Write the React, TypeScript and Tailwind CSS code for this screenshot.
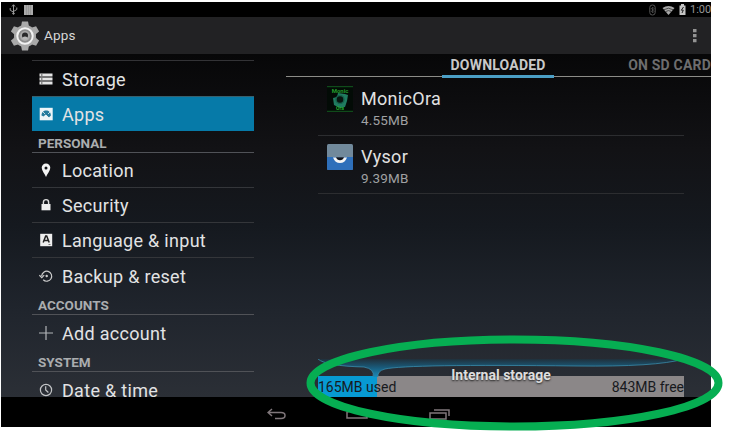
import React from "react";

function GearIcon() {
  return (
    <svg className="h-[30px] w-7 shrink-0" viewBox="0 0 28 30">
      <g fill="#a9a9a9">
        {[0, 60, 120].map((a) => (
          <path key={a} d="M11 0.5h6l1 5v19l-1 5h-6l-1-5v-19z" transform={`rotate(${a} 14 15)`} />
        ))}
        <circle cx="14" cy="15" r="11" />
      </g>
      <circle cx="14" cy="15" r="7.7" fill="#8c8c8c" stroke="#f2f2f2" strokeWidth="2" />
      <circle cx="14" cy="15" r="5" fill="#aaa" />
      <circle cx="14" cy="14.6" r="3" fill="#29292a" />
      <path d="M11.5 16.5q2.5-2 5 0v2h-5z" fill="#b8b8b8" />
    </svg>
  );
}

const icons: Record<string, React.ReactNode> = {
  storage: (
    <g>
      <path d="M0.5 1.5h13v3h-13zM0.5 5.5h13v3h-13zM0.5 9.5h13v3h-13z" fill="#e4e4e4" />
      <path d="M2 2.5h1.5v1H2zM2 6.5h1.5v1H2zM2 10.5h1.5v1H2z" fill="#333" />
    </g>
  ),
  apps: (
    <g>
      <rect x="0.7" y="0.8" width="13" height="12.5" fill="#edf5f8" />
      <path d="M2.5 8.5c0-3 2-5 4.7-5s4.7 2 4.7 5l-2 2-3.2-3-2.2 2z" fill="#237b9d" />
      <path d="M4 11l3-3 3 3M4 5l2 2M11 5l-2 2" fill="none" stroke="#e8f2f5" strokeWidth="0.8" />
    </g>
  ),
  location: (
    <path d="M7 0.5a4.3 4.3 0 0 0-4.3 4.3C2.7 8 6 11 7 14c1-3 4.3-6 4.3-9.2A4.3 4.3 0 0 0 7 .5zM7 3.4a1.5 1.5 0 1 1 0 3 1.5 1.5 0 0 1 0-3z" fill="#f4f4f4" fillRule="evenodd" />
  ),
  security: (
    <g>
      <rect x="2.5" y="6" width="9" height="6.3" fill="#eee" />
      <path d="M4.4 6.5V4.2a2.6 2.6 0 0 1 5.2 0v2.3" fill="none" stroke="#ddd" strokeWidth="1.4" />
    </g>
  ),
  language: (
    <g>
      <rect x="1.2" y="0.8" width="12" height="12.4" fill="#eee" />
      <path d="M4.2 9.5L6.7 3h1l2.5 6.5M5.1 7.5h4.2" fill="none" stroke="#222" strokeWidth="1.5" />
      <path d="M9.5 11.5h2" stroke="#777" />
    </g>
  ),
  backup: (
    <g fill="none" stroke="#ccc" strokeWidth="1.2">
      <path d="M2.7 7a5 5 0 1 1 1.5 3.8" />
      <path d="M0.4 6.2l2.4 2.4 2.4-2.4" />
      <circle cx="7.7" cy="7" r="0.6" fill="#ccc" />
    </g>
  ),
  add: <path d="M7 0v14M0 7h14" stroke="#b2b5b8" strokeWidth="1.2" />,
  clock: (
    <g fill="none" stroke="#c3c5c7" strokeWidth="1.2">
      <circle cx="7" cy="7" r="5.6" />
      <path d="M6.7 3.3V7l2.7 2.5" />
    </g>
  ),
};

function Item({ icon, label, last, active }: { icon: string; label: string; last?: boolean; active?: boolean }) {
  return (
    <div
      className={`flex h-[35px] shrink-0 items-center pl-[7px] ${
        active ? "border-t border-[#37616f] bg-[#067aa8]" : last ? "" : "border-b border-[#34363a]"
      }`}
    >
      <svg className="mr-[9px] h-3.5 w-3.5 shrink-0" viewBox="0 0 14 14">
        {icons[icon]}
      </svg>
      <span className="relative top-px whitespace-nowrap text-[18px] leading-[22px] tracking-[0.3px] text-[#e2e3e4]">{label}</span>
    </div>
  );
}

function Header({ children }: { children: string }) {
  return (
    <div className="flex h-[22px] shrink-0 items-center border-b border-[#505257] pl-[6px] pt-[3px] text-[13.5px] font-bold leading-[18px] text-[#aaadaf]">
      {children}
    </div>
  );
}

function StatusBar() {
  return (
    <div className="flex h-[15px] shrink-0 items-center bg-black pl-2 text-[#969696]">
      <svg className="h-[11px] w-[9px]" viewBox="0 0 9 11" fill="none" stroke="#999">
        <path d="M4.5 1v9M1.2 4v2.2l3.3 2M7.8 3.5v2l-3.3 2M3 2.5L4.5.7 6 2.5" />
        <circle cx="4.5" cy="9.5" r="0.8" fill="#999" />
      </svg>
      <svg className="ml-[6px] h-[11px] w-[9px]" viewBox="0 0 9 11">
        <path d="M0 1h9v10H0z" fill="#aaa" />
        <path d="M2.5 1v10M4.5 1v10M6.5 1v10" stroke="#8b8b8b" strokeWidth="0.6" />
      </svg>
      <div className="flex-1" />
      <svg className="h-[12px] w-[7px]" viewBox="0 0 7 12" fill="none" stroke="#555">
        <rect x="0.8" y="1" width="5.4" height="10" rx="2.5" />
        <path d="M2 4l3 3.5L3.5 9V3L5 4.5 2 8" strokeWidth="0.7" />
      </svg>
      <svg className="ml-[6px] h-[10px] w-[13px]" viewBox="0 0 13 10">
        <path d="M0.5 3Q6.5-1 12.5 3L6.5 10z" fill="#aaa" />
        <path d="M2 4.7q4.5-3 9 0M3.8 6.5q2.7-1.8 5.4 0" fill="none" stroke="#333" strokeWidth="0.8" />
      </svg>
      <svg className="ml-[4px] h-[11px] w-[7px]" viewBox="0 0 7 11">
        <path d="M0.5 1.5H2V0h3v1.5h1.5V11h-6z" fill="#c4c4c4" />
        <path d="M4.5 3L2.3 6.2h2L3 9" fill="none" stroke="#222" />
      </svg>
      <span className="ml-[4px] w-[21px] overflow-hidden whitespace-nowrap text-[11px] leading-[14px]">1:00</span>
    </div>
  );
}

function MonicIcon() {
  return (
    <svg className="h-[26px] w-[26px]" viewBox="0 0 26 26">
      <rect width="26" height="26" fill="#030b06" />
      <path d="M0 .7h26M0 25.3h26" stroke="#145b20" />
      <path d="M11 7l7 1 3 1-1 6-2 6-5 1-6-3-1-7 4-1z" fill="#207c60" />
      <circle cx="13" cy="13.5" r="4" fill="#07150f" stroke="#17644e" strokeWidth="1.5" />
      <text x="13" y="6.5" textAnchor="middle" fontSize="6" fontWeight="bold" fill="#229c2c">Monic</text>
      <text x="13" y="24" textAnchor="middle" fontSize="5" fontWeight="bold" fill="#22ae2c">Ora</text>
    </svg>
  );
}

function VysorIcon() {
  return (
    <svg className="h-[26px] w-[26px]" viewBox="0 0 26 26">
      <rect width="26" height="26" rx="1.5" fill="#71899b" />
      <path d="M0 13h26v11.5a1.5 1.5 0 0 1-1.5 1.5h-23A1.5 1.5 0 0 1 0 24.500z" fill="#2e6fba" />
      <path d="M6 13.500h14q-2 5.500-7 5.500t-7-5.500z" fill="#f4f4f4" />
      <path d="M9 13.300h8q-1 3-4 3t-4-3z" fill="#10131a" />
    </svg>
  );
}

function AppRow({ icon, name, size }: { icon: React.ReactNode; name: string; size: string }) {
  return (
    <div className="ml-8 mr-[27px] flex h-[58px] border-b border-[#2c2d30] pl-[9px] pt-[8px]">
      {icon}
      <div className="ml-[8px] pt-[2px]">
        <div className="text-[18px] leading-[21px] tracking-[0.3px] text-[#e1e1e1]">{name}</div>
        <div className="mt-px text-[13.5px] leading-[20px] tracking-[0.2px] text-[#a0a1a3]">{size}</div>
      </div>
    </div>
  );
}

function StorageMeter() {
  return (
    <div className="ml-8 mr-[27px] mt-auto">
      <div className="relative h-[17px]">
        <svg className="block h-[18px] w-full" viewBox="0 0 366 18" preserveAspectRatio="none">
          <defs>
            <linearGradient id="funnel" x1="0" y1="0" x2="0" y2="1">
              <stop offset="0" stopColor="#20303b" />
              <stop offset="0.5" stopColor="#195d7e" />
              <stop offset="1" stopColor="#1a8cba" />
            </linearGradient>
          </defs>
          <path d="M0 0h366Q338 8 258 7Q90 5 67 10Q59 12 60 18H55Q57 10 46 8Q8 7 0 0z" fill="url(#funnel)" />
          <path d="M0 0Q8 7 46 8Q57 10 55 18M60 18Q59 12 67 10Q90 5 258 7Q338 8 366 0" fill="none" stroke="#398aaa" strokeWidth="0.8" />
        </svg>
        <span className="absolute left-0 top-[7px] w-full text-center text-[14px] font-bold leading-[18px] text-[#dedede] [text-shadow:0_1px_2px_#222]">
          Internal storage
        </span>
      </div>
      <div className="flex h-[21px] items-center justify-between bg-[linear-gradient(90deg,#079ad3_59px,#8b8788_59px)] text-[14px] leading-[20px] text-[#17191d]">
        <span>165MB used</span>
        <span>843MB free</span>
      </div>
    </div>
  );
}

export default function App() {
  return (
    <main className="relative h-[431px] w-[731px] overflow-hidden bg-white pl-px pt-[2px] font-[Roboto,sans-serif]">
      <div className="flex h-[425px] w-[710px] flex-col overflow-hidden bg-black">
        <StatusBar />
        <header className="flex h-[37px] shrink-0 items-center bg-[#222224] pl-[10px] pr-[14px]">
          <GearIcon />
          <h1 className="ml-[5px] text-[13.5px] tracking-[0.2px] text-[#d7d7d7]">Apps</h1>
          <svg className="ml-auto h-[15px] w-[4px]" viewBox="0 0 4 15" fill="#939393">
            <path d="M0 1h3.500v3.300H0zM0 6h3.500v3.300H0zM0 11h3.500v3.300H0z" />
          </svg>
        </header>
        <div className="flex h-[343px] shrink-0 bg-[linear-gradient(180deg,#070708_0%,#121215_28%,#15191f_50%,#20252d_75%,#2b2f36_100%)]">
          <nav className="ml-[31px] flex w-[222px] flex-col overflow-hidden pt-[6px]">
            <div className="h-px shrink-0 bg-[#333336]" />
            <Item icon="storage" label="Storage" last />
            <Item icon="apps" label="Apps" active />
            <Header>PERSONAL</Header>
            <Item icon="location" label="Location" />
            <Item icon="security" label="Security" />
            <Item icon="language" label="Language & input" />
            <Item icon="backup" label="Backup & reset" last />
            <Header>ACCOUNTS</Header>
            <Item icon="add" label="Add account" last />
            <Header>SYSTEM</Header>
            <Item icon="clock" label="Date & time" last />
          </nav>
          <section className="ml-[32px] flex w-[425px] flex-col overflow-hidden">
            <div className="flex h-[24px] shrink-0 bg-[linear-gradient(#8c8c88,#8c8c88)] bg-[length:100%_1px] bg-[position:0_22px] bg-no-repeat text-[14px] font-bold leading-[22px]">
              <div className="ml-[156px] w-[118px] border-b-[3px] border-[#4b9fc6] text-center tracking-[0.2px] text-[#c8c8c8]">DOWNLOADED</div>
              <div className="ml-[74px] whitespace-nowrap tracking-[0.2px] text-[#6d6d6e]">ON SD CARD</div>
            </div>
            <AppRow icon={<MonicIcon />} name="MonicOra" size="4.55MB" />
            <AppRow icon={<VysorIcon />} name="Vysor" size="9.39MB" />
            <StorageMeter />
          </section>
        </div>
        <footer className="flex h-[30px] shrink-0 items-start bg-black pl-[266px] pt-[11px]">
          <svg className="h-[16px] w-[184px]" viewBox="0 0 184 16" fill="none" stroke="#80777b" strokeWidth="1.5">
            <path d="M5 1L1 4.500l4 3.500M1 4.500h13q4 0 4 3t-4 3H8" />
            <path d="M80 10V4l10-3 10 3v6z" />
            <path d="M163 5h16v6h-16zM167 2h15v6" />
          </svg>
        </footer>
      </div>
      <svg className="pointer-events-none absolute left-0 top-0 h-[431px] w-[731px]" viewBox="0 0 731 431">
        <ellipse cx="514.500" cy="383" rx="204" ry="43.500" fill="none" stroke="#06ae52" strokeWidth="8" />
      </svg>
    </main>
  );
}
